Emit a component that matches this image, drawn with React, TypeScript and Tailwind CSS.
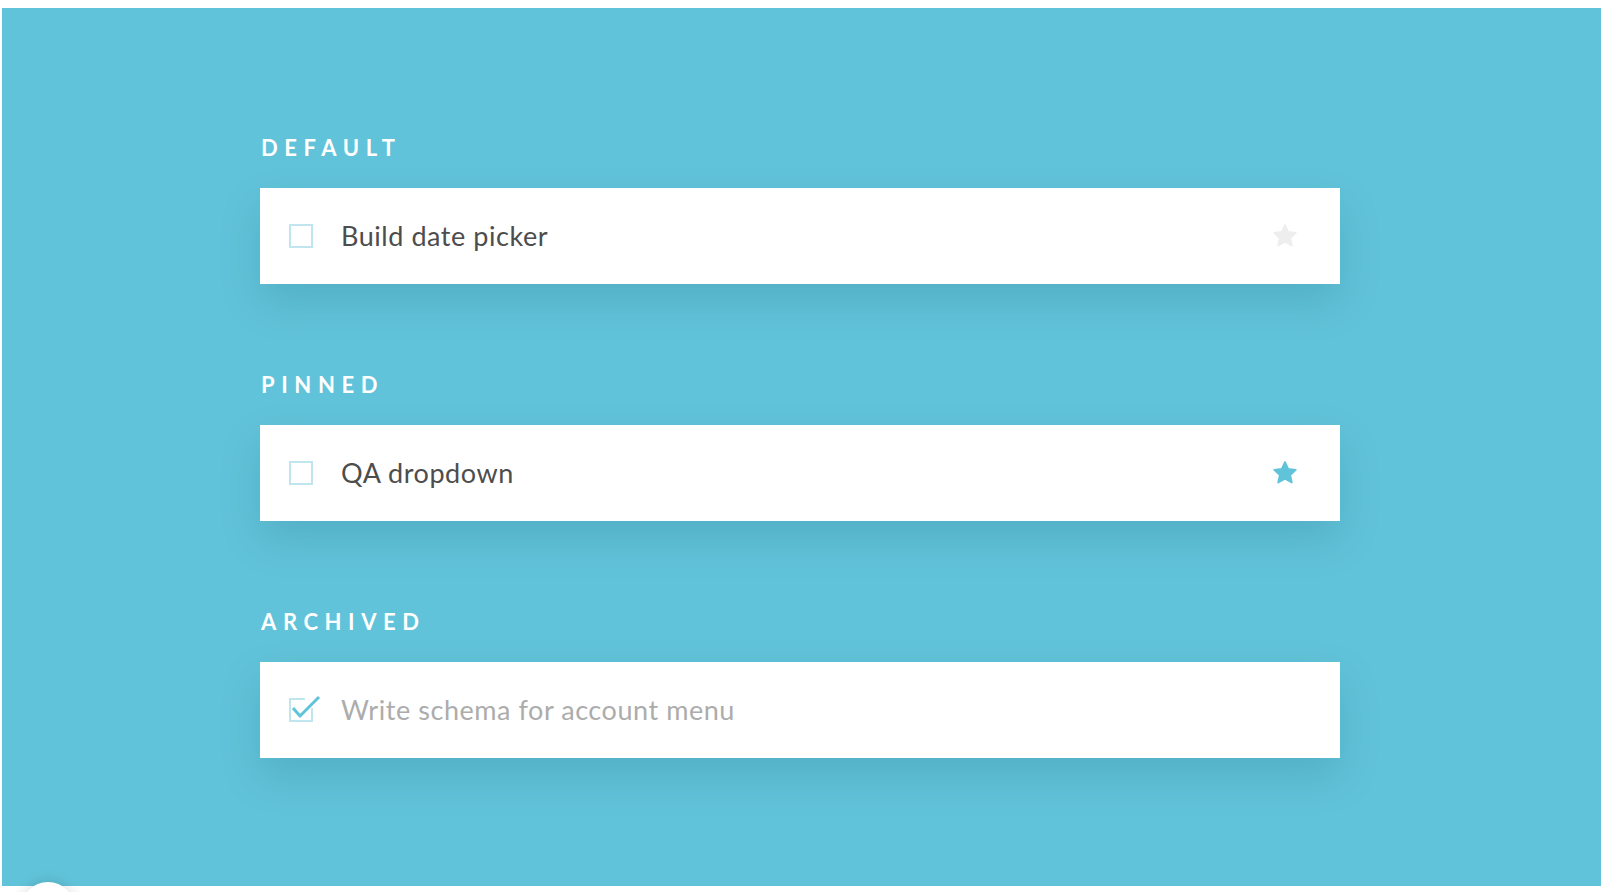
import React from "react";

type Task = { title: string; state: "default" | "pinned" | "archived" };

const sections: { label: string; task: Task }[] = [
  { label: "Default", task: { title: "Build date picker", state: "default" } },
  { label: "Pinned", task: { title: "QA dropdown", state: "pinned" } },
  { label: "Archived", task: { title: "Write schema for account menu", state: "archived" } },
];

function Star({ active }: { active: boolean }) {
  const color = active ? "#61c3d9" : "#eeeeee";
  return (
    <svg width="28" height="28" viewBox="0 0 24 24" aria-hidden="true">
      <path
        d="M12 2.6l2.8 6 6.4.7-4.8 4.4 1.4 6.4L12 16.8l-5.8 3.3 1.4-6.4-4.8-4.4 6.4-.7z"
        fill={color}
        stroke={color}
        strokeWidth="1.6"
        strokeLinejoin="round"
      />
    </svg>
  );
}

function Checkbox({ checked }: { checked: boolean }) {
  if (!checked) {
    return <span className="block w-[24px] h-[24px] border-2 border-[#bfe6ef] shrink-0" />;
  }
  return (
    <svg width="32" height="28" viewBox="0 0 32 28" className="shrink-0 -mt-[4px] -mr-[8px]" aria-hidden="true">
      <path d="M1 5h15M1 4v24M0 27h24M23 28V14" stroke="#bfe6ef" strokeWidth="2" fill="none" />
      <path d="M4 14l7 8L30 3" stroke="#61c3d9" strokeWidth="3" fill="none" strokeLinejoin="round" />
    </svg>
  );
}

function TaskCard({ task }: { task: Task }) {
  const archived = task.state === "archived";
  return (
    <div className="h-[96px] bg-white flex items-center pl-[29px] pr-[41px] shadow-[0_18px_40px_rgba(20,90,110,0.18)]">
      <Checkbox checked={archived} />
      <span
        className={`ml-[28px] flex-1 text-[27px] leading-none tracking-[0.55px] -mt-[2px] ${archived ? "text-[#acacac]" : "text-[#4d4d4d]"}`}
      >
        {task.title}
      </span>
      {!archived && <Star active={task.state === "pinned"} />}
    </div>
  );
}

export default function App() {
  return (
    <div
      className="relative w-[1608px] h-[892px] overflow-hidden bg-white pt-[8px] pl-[2px]"
      style={{ fontFamily: "Lato, 'Open Sans', sans-serif" }}
    >
      <div className="w-[1599px] h-[878px] bg-[#61c3d9] pt-[129px]">
        <div className="w-[1080px] ml-[258px] flex flex-col gap-[90px]">
          {sections.map((s) => (
            <section key={s.label}>
              <h2 className="text-white font-bold text-[22px] leading-none uppercase tracking-[0.3em] pl-[1px] mb-[29px]">
                {s.label}
              </h2>
              <TaskCard task={s.task} />
            </section>
          ))}
        </div>
      </div>

      {/* floating button peeking at the bottom */}
      <div className="absolute left-[21px] top-[882px] w-[54px] h-[54px] rounded-full bg-white shadow-[0_0_14px_rgba(0,0,0,0.15)]" />
    </div>
  );
}
